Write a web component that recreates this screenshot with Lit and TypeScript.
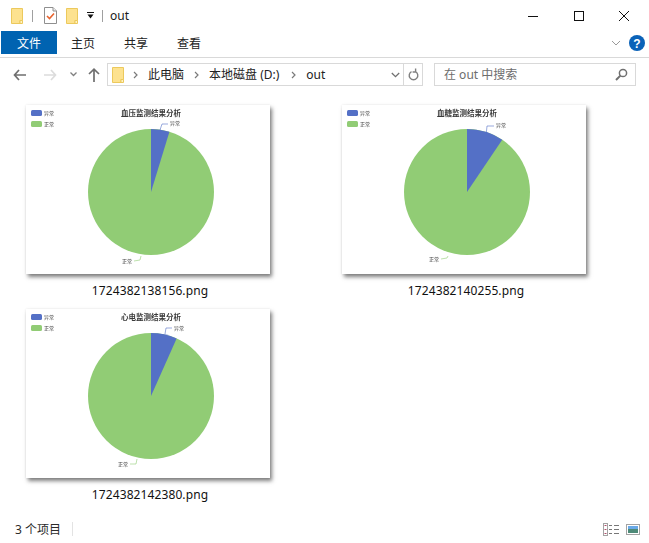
import { LitElement, html, css } from "lit";
import { customElement } from "lit/decorators.js";

const folder = (cls = "") => html`<svg class="ico ${cls}" width="14" height="18" viewBox="0 0 14 18">
  <path d="M1.5 1.5H12.5V13.5H10V16.5H1.5Z" fill="#fde28f" stroke="#ecc95c"/>
  <path d="M10 16.5V13.5H12.5V16.5Z" fill="#fff3c4" stroke="#ecc95c"/>
</svg>`;

interface Chart {
  file: string;
  title: string;
  angle: number;
  up: string;
  upAt: [number, number];
  down: string;
  downAt: [number, number];
}

const charts: Chart[] = [
  { file: "1724382138156.png", title: "血压监测结果分析", angle: 17, up: "134,25 136,19 142,19", upAt: [144, 20], down: "115,151 114,155 108,156", downAt: [96, 158] },
  { file: "1724382140255.png", title: "血糖监测结果分析", angle: 34, up: "144,31 145,21 152,21", upAt: [154, 22], down: "106,151 105,153 99,154", downAt: [87, 156] },
  { file: "1724382142380.png", title: "心电监测结果分析", angle: 24, up: "139,25 140,19 146,19", upAt: [148, 21], down: "111,150 110,155 104,155", downAt: [92, 157] },
];

@customElement("app-chart")
export class AppChart extends LitElement {
  static properties = { chart: { attribute: false } };
  chart!: Chart;
  static styles = css`
    :host { display: block; width: 244px; height: 169px; }
    svg { display: block; filter: blur(0.45px); }
    text { font-family: "Noto Sans CJK SC", sans-serif; }
    .title { font-size: 7.5px; font-weight: 700; fill: #3a3a3a; }
    .small { font-size: 5px; fill: #444; }
  `;
  render() {
    const c = this.chart;
    const cx = 125, cy = 87, r = 63;
    const a = (c.angle * Math.PI) / 180;
    const ex = cx + r * Math.sin(a), ey = cy - r * Math.cos(a);
    return html`<svg width="244" height="169" viewBox="0 0 244 169">
      <rect width="244" height="169" fill="#fff"/>
      <text class="title" x="125" y="11" text-anchor="middle">${c.title}</text>
      <rect x="5" y="5" width="11" height="6" rx="1.5" fill="#5470c6"/>
      <rect x="5" y="16" width="11" height="6" rx="1.5" fill="#91cc75"/>
      <text class="small" x="18" y="10">异常</text>
      <text class="small" x="18" y="21">正常</text>
      <circle cx="${cx}" cy="${cy}" r="${r}" fill="#91cc75"/>
      <path d="M${cx} ${cy}L${cx} ${cy - r}A${r} ${r} 0 0 1 ${ex} ${ey}Z" fill="#5470c6"/>
      <polyline points="${c.up}" fill="none" stroke="#5470c6" stroke-width=".6"/>
      <polyline points="${c.down}" fill="none" stroke="#91cc75" stroke-width=".6"/>
      <text class="small" x="${c.upAt[0]}" y="${c.upAt[1]}">异常</text>
      <text class="small" x="${c.downAt[0]}" y="${c.downAt[1]}">正常</text>
    </svg>`;
  }
}

@customElement("app-root")
export class AppRoot extends LitElement {
  static styles = css`
    :host {
      display: flex; flex-direction: column; width: 649px; height: 543px; background: #fff; overflow: hidden;
      font-family: "Noto Sans", "Noto Sans CJK SC", sans-serif; font-size: 12px; color: #1a1a1a;
    }
    .ico { display: block; flex: none; }
    .titlebar { display: flex; align-items: center; height: 31px; padding-left: 10px; flex: none; }
    .sep { width: 1px; height: 12px; background: #a0a0a0; flex: none; }
    .titlebar .sep.a { margin: 0 11px 0 8px; }
    .titlebar .sep.b { margin: 0 7px 0 8px; }
    .titlebar .gap { margin-left: 8px; }
    .titlebar .drop { margin-left: 8px; }
    .grow { flex: 1; }
    .winbtns { display: flex; align-self: stretch; padding-right: 2px; }
    .winbtn { width: 45.5px; display: flex; align-items: center; justify-content: center; }
    .tabs { display: flex; align-items: center; height: 23px; flex: none; padding-left: 1px; }
    .tab { display: flex; align-items: center; justify-content: center; width: 53px; height: 23px; color: #222; }
    .tab.file { width: 56px; background: #0063b1; color: #fff; margin-right: 12px; }
    .tab.first { width: 28px; margin-right: 25px; }
    .tab.second { width: 28px; margin-right: 25px; }
    .tab.third { width: 28px; }
    .help { margin: 0 4px 0 8px; }
    .ribbon-line { height: 1px; background: #d9d9d9; margin-top: 3px; flex: none; }
    .nav { display: flex; align-items: center; height: 23px; margin-top: 5px; padding-left: 13px; flex: none; }
    .nav .fwd { margin-left: 18px; }
    .nav .rec { margin-left: 13px; }
    .nav .up { margin-left: 11px; }
    .addr {
      display: flex; align-items: center; box-sizing: border-box; width: 316px; height: 23px; margin-left: 7px;
      border: 1px solid #d9d9d9; padding-left: 3px; flex: none;
    }
    .crumb { margin-left: 10px; margin-bottom: 1px; color: #222; }
    .cr { margin-left: 10px; }
    .addr .cr.first { margin-left: 8px; }
    .addr .cr.last { margin-left: 12px; }
    .addr .tail { display: flex; align-items: center; justify-content: center; width: 18px; align-self: stretch; border-left: 1px solid #d9d9d9; }
    .addr .dd { margin-right: 3px; }
    .search {
      display: flex; align-items: center; justify-content: space-between; box-sizing: border-box; width: 202px; height: 23px;
      margin-left: 11px; border: 1px solid #d9d9d9; padding: 0 7px 0 9px; color: #6d6d6d; flex: none;
    }
    .search span { margin-bottom: 1px; }
    .files {
      flex: 1; display: grid; grid-template-columns: 316px 248px; grid-auto-rows: 204px; align-content: start;
      padding: 19px 0 0 26px;
    }
    .tile { width: 248px; }
    .thumb { width: 244px; box-shadow: 2px 3px 4px rgba(0, 0, 0, 0.5), 0 0 2px rgba(0, 0, 0, 0.08); }
    .name { text-align: center; margin-top: 8px; line-height: 18px; color: #111; letter-spacing: 0.1px; }
    .status { display: flex; align-items: center; height: 24px; padding: 0 9px 2px 15px; flex: none; color: #2b2b2b; }
    .status .sep { height: 14px; background: #e3e3e3; margin-left: 11px; }
    .status .views { display: flex; gap: 7px; align-items: center; }
  `;

  render() {
    return html`
      <div class="titlebar">
        ${folder()}
        <span class="sep a"></span>
        <svg class="ico" width="13" height="17" viewBox="0 0 13 17">
          <path d="M.5.5H9L12.5 4V16.5H.5Z" fill="#fff" stroke="#8f8f8f"/>
          <path d="M9 .5V4H12.5" fill="#eee" stroke="#8f8f8f"/>
          <path d="M3 9L5.5 11.5L10 6.5" fill="none" stroke="#e8632e" stroke-width="1.6"/>
        </svg>
        ${folder("gap")}
        <svg class="ico drop" width="7" height="7" viewBox="0 0 7 7">
          <path d="M0 .5H7" stroke="#111" fill="none"/>
          <path d="M.5 2.5H6.5L3.5 6.5Z" fill="#111"/>
        </svg>
        <span class="sep b"></span>
        <span>out</span>
        <span class="grow"></span>
        <div class="winbtns">
          <div class="winbtn"><svg width="10" height="10" viewBox="0 0 10 10"><path d="M0 5.5H10" stroke="#111"/></svg></div>
          <div class="winbtn"><svg width="10" height="10" viewBox="0 0 10 10"><rect x=".5" y=".5" width="9" height="9" fill="none" stroke="#111"/></svg></div>
          <div class="winbtn"><svg width="10" height="10" viewBox="0 0 10 10"><path d="M0 0L10 10M10 0L0 10" stroke="#111"/></svg></div>
        </div>
      </div>
      <div class="tabs">
        <div class="tab file">文件</div>
        <div class="tab first">主页</div>
        <div class="tab second">共享</div>
        <div class="tab third">查看</div>
        <span class="grow"></span>
        <svg class="ico" width="10" height="6" viewBox="0 0 10 6"><path d="M1 1L5 5L9 1" fill="none" stroke="#9a9a9a"/></svg>
        <svg class="ico help" width="16" height="16" viewBox="0 0 16 16">
          <circle cx="8" cy="8" r="8" fill="#0a62b8"/>
          <text x="8" y="12.5" text-anchor="middle" font-size="12" font-weight="700" fill="#fff" font-family="Liberation Sans, sans-serif">?</text>
        </svg>
      </div>
      <div class="ribbon-line"></div>
      <div class="nav">
        <svg class="ico" width="13" height="12" viewBox="0 0 13 12"><path d="M6 1L1.5 6L6 11M1.5 6H13" fill="none" stroke="#6f6f6f" stroke-width="1.7"/></svg>
        <svg class="ico fwd" width="13" height="12" viewBox="0 0 13 12"><path d="M7 1L11.5 6L7 11M11.5 6H0" fill="none" stroke="#dcdcdc" stroke-width="1.7"/></svg>
        <svg class="ico rec" width="7" height="5" viewBox="0 0 7 5"><path d="M.5 .5L3.5 3.5L6.5 .5" fill="none" stroke="#808080" stroke-width="1.3"/></svg>
        <svg class="ico up" width="12" height="14" viewBox="0 0 12 14"><path d="M1 6L6 1.2L11 6M6 1.2V14" fill="none" stroke="#6f6f6f" stroke-width="1.7"/></svg>
        <div class="addr">
          ${folder()}
          <svg class="ico cr first" width="5" height="8" viewBox="0 0 5 8"><path d="M1 1L4 4L1 7" fill="none" stroke="#7a7a7a" stroke-width="1.2"/></svg>
          <span class="crumb">此电脑</span>
          <svg class="ico cr" width="5" height="8" viewBox="0 0 5 8"><path d="M1 1L4 4L1 7" fill="none" stroke="#7a7a7a" stroke-width="1.2"/></svg>
          <span class="crumb">本地磁盘 (D:)</span>
          <svg class="ico cr last" width="5" height="8" viewBox="0 0 5 8"><path d="M1 1L4 4L1 7" fill="none" stroke="#7a7a7a" stroke-width="1.2"/></svg>
          <span class="crumb">out</span>
          <span class="grow"></span>
          <svg class="ico dd" width="9" height="6" viewBox="0 0 9 6"><path d="M.8 1L4.5 4.6L8.2 1" fill="none" stroke="#707070" stroke-width="1.3"/></svg>
          <div class="tail">
            <svg class="ico" width="11" height="13" viewBox="0 0 11 13"><path d="M3.5 3.6A4.3 4.3 0 1 0 7.5 3.6M7.6 .6V4H4.6" fill="none" stroke="#808080" stroke-width="1.4"/></svg>
          </div>
        </div>
        <div class="search">
          <span>在 out 中搜索</span>
          <svg class="ico" width="13" height="13" viewBox="0 0 13 13"><circle cx="8" cy="5" r="3.6" fill="none" stroke="#707070" stroke-width="1.5"/><path d="M5.4 7.6L1 12" stroke="#707070" stroke-width="2"/></svg>
        </div>
      </div>
      <div class="files">
        ${charts.map((c) => html`<div class="tile">
          <div class="thumb"><app-chart .chart=${c}></app-chart></div>
          <div class="name">${c.file}</div>
        </div>`)}
      </div>
      <div class="status">
        <span>3 个项目</span>
        <span class="sep"></span>
        <span class="grow"></span>
        <div class="views">
          <svg class="ico" width="16" height="13" viewBox="0 0 16 13">
            <rect x=".5" y=".5" width="4" height="12" fill="#fff" stroke="#a3a3a3"/>
            <path d="M1.5 2.5H3.5M1.5 6.5H3.5M1.5 10.5H3.5" stroke="#b0506a"/>
            <path d="M6 2.5H9M11 2.5H16M6 6.5H9M11 6.5H16M6 10.5H9M11 10.5H16" stroke="#777"/>
          </svg>
          <svg class="ico" width="14" height="11" viewBox="0 0 14 11">
            <rect x=".5" y=".5" width="13" height="10" fill="#fff" stroke="#a3a3a3"/>
            <rect x="2" y="2" width="10" height="3" fill="#69a9e8"/>
            <rect x="2" y="5" width="10" height="4" fill="#4e8a78"/>
          </svg>
        </div>
      </div>
    `;
  }
}
